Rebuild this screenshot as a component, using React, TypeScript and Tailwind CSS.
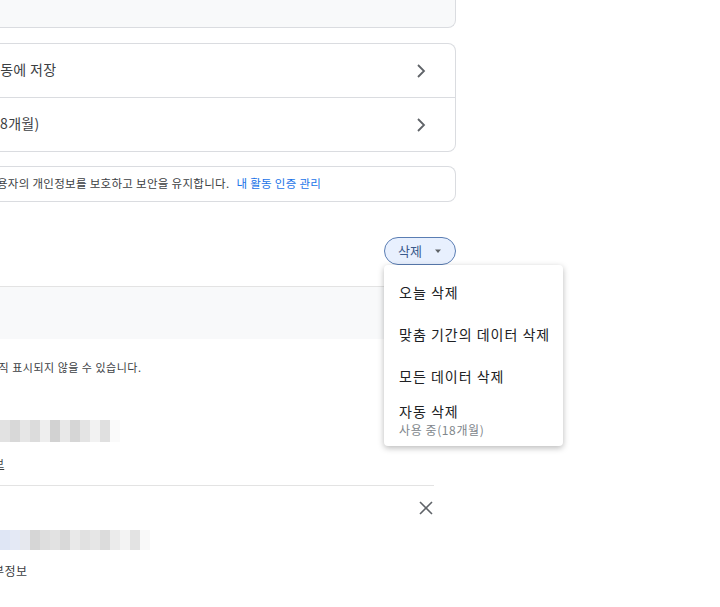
import React from "react";

const font = { fontFamily: '"Noto Sans CJK KR", "Noto Sans", Roboto, sans-serif' };

function Chevron() {
  return (
    <svg width="24" height="24" viewBox="0 0 24 24" className="text-[#5f6368]">
      <path d="M9 6l6 6-6 6" fill="none" stroke="currentColor" strokeWidth="1.8" />
    </svg>
  );
}

function Pixels({ cells, h }: { cells: string[]; h: string }) {
  return (
    <div className={`flex ${h}`}>
      {cells.map((c, i) => (
        <div key={i} className="w-[10px] h-full" style={{ background: c }} />
      ))}
    </div>
  );
}

export default function App() {
  const px1 = ["#e2e2e2", "#d8d8d8", "#e6e6e6", "#dcdcdc", "#eeeeee", "#d2d2d2", "#e8e8e8", "#d6d6d6", "#e4e4e4", "#f2f2f2", "#e0e0e0", "#fafafa"];
  const px2 = ["#dfe6f5", "#e4e9f5", "#e6e8ee", "#d6d6d6", "#dedede", "#e2e2e2", "#d9d9d9", "#e9e9e9", "#e1e1e1", "#e6e6e6", "#dcdcdc", "#ebebeb", "#f3f3f3", "#e3e3e3", "#f9f9f9"];
  return (
    <div className="relative w-[720px] h-[607px] overflow-hidden bg-white text-[#3c4043]" style={font}>
      <div className="w-[456px] flex flex-col">
        {/* top card */}
        <div className="h-[28px] bg-[#f8f9fa] border-b border-r border-[#dadce0] rounded-br-lg" />

        {/* settings card */}
        <div className="mt-[15px] border-y border-r border-[#dadce0] rounded-r-lg flex flex-col">
          <div className="h-[53px] flex items-center justify-between pr-[22px]">
            <span className="text-[14px] ml-[-13px] tracking-[0.3px] leading-[18px] mt-[-3px]">활동에 저장</span>
            <Chevron />
          </div>
          <div className="h-px bg-[#dadce0]" />
          <div className="h-[53px] flex items-center justify-between pr-[22px]">
            <span className="text-[14px] ml-[-13px] tracking-[0.3px] leading-[18px] mt-[-3px]">(18개월)</span>
            <Chevron />
          </div>
        </div>

        {/* info card */}
        <div className="mt-[14px] h-[36px] border-y border-r border-[#dadce0] rounded-r-lg flex items-center">
          <span className="text-[11.5px] ml-[-14px] whitespace-nowrap tracking-[0.3px]">
            사용자의 개인정보를 보호하고 보안을 유지합니다.{" "}
            <span className="text-[#1a73e8] ml-[4px]">내 활동 인증 관리</span>
          </span>
        </div>

        {/* delete button */}
        <div className="mt-[35px] flex justify-end">
          <button className="h-[28px] w-[72px] rounded-full border border-[#5a7db3] bg-[#e8f0fe] flex items-center pl-[13px] gap-[12px] text-[13px] text-[#3a5a8c]">
            <span>삭제</span>
            <svg width="8" height="5" viewBox="0 0 8 5"><path d="M1 0.5h6L4 4z" fill="#5f6368" /></svg>
          </button>
        </div>

        {/* grey strip */}
        <div className="mt-[21px] h-[53px] border-t border-[#e3e3e3] bg-[#f8f9fa]" />

        <div className="mt-[20px] text-[11px] ml-[-12px] whitespace-nowrap tracking-[0.5px]">아직 표시되지 않을 수 있습니다.</div>

        <div className="mt-[44px]">
          <Pixels cells={px1} h="h-[22px]" />
        </div>
        <div className="mt-[13px] h-[16px] ml-[-16px] text-[11px] whitespace-nowrap leading-[16px]">
          <span className="underline">정보</span>
        </div>

        <div className="mt-[14px] w-[434px] h-px bg-[#e3e3e3]" />
        <div className="h-[44px] flex items-center justify-end pr-[22px] w-[456px]">
          <svg width="16" height="16" viewBox="0 0 16 16">
            <path d="M2 2l12 12M14 2L2 14" stroke="#5f6368" strokeWidth="1.6" />
          </svg>
        </div>
        <div>
          <Pixels cells={px2} h="h-[20px]" />
        </div>
        <div className="mt-[12px] text-[12px] ml-[-7px] whitespace-nowrap tracking-[0.5px]">부정보</div>
      </div>

      {/* dropdown menu */}
      <div className="absolute left-[384px] top-[265px] w-[179px] bg-white rounded shadow-[0_2px_6px_rgba(0,0,0,0.28)] pt-[6px] pb-[3px] text-[#202124]">
        <div className="h-[42px] flex items-center px-[15px] text-[14px] tracking-[1px]">오늘 삭제</div>
        <div className="h-[42px] flex items-center px-[15px] text-[14px] tracking-[1px] whitespace-nowrap">맞춤 기간의 데이터 삭제</div>
        <div className="h-[42px] flex items-center px-[15px] text-[14px] tracking-[1px]">모든 데이터 삭제</div>
        <div className="h-[46px] flex flex-col justify-center px-[15px]">
          <span className="text-[14px] leading-[19px] tracking-[1px]">자동 삭제</span>
          <span className="text-[12px] leading-[17px] text-[#80868b] tracking-[0.6px]">사용 중(18개월)</span>
        </div>
      </div>
    </div>
  );
}
